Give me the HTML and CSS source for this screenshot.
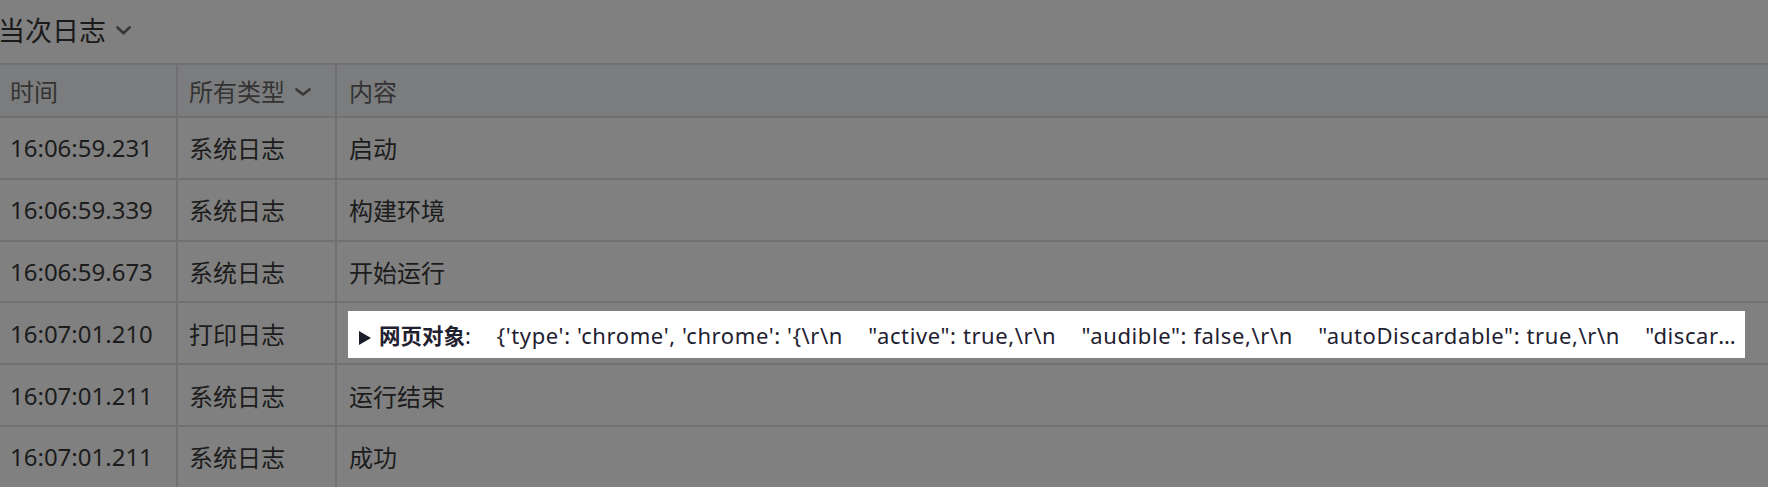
FILE: index.html
```html
<!DOCTYPE html>
<html lang="zh-CN">
<head>
<meta charset="utf-8">
<title>当次日志</title>
<link rel="stylesheet" href="styles.css">
</head>
<body>
<div class="page">
  <div class="title">
    <span class="title-text">当次日志</span>
    <svg class="chev-title" width="15" height="9" viewBox="0 0 15 9"><polyline points="1.5,1.5 7.5,7.3 13.5,1.5" fill="none" stroke="#383838" stroke-width="2.6" stroke-linecap="round" stroke-linejoin="round"/></svg>
  </div>
  <div class="log">
    <div class="row head">
      <div class="cell c1">时间</div>
      <div class="cell c2">所有类型<svg class="chev-head" width="16" height="8" viewBox="0 0 16 8"><polyline points="1.5,1.4 8,6.6 14.5,1.4" fill="none" stroke="#383838" stroke-width="2.6" stroke-linecap="round" stroke-linejoin="round"/></svg></div>
      <div class="cell c3">内容</div>
    </div>
    <div class="row">
      <div class="cell c1">16:06:59.231</div>
      <div class="cell c2">系统日志</div>
      <div class="cell c3">启动</div>
    </div>
    <div class="row">
      <div class="cell c1">16:06:59.339</div>
      <div class="cell c2">系统日志</div>
      <div class="cell c3">构建环境</div>
    </div>
    <div class="row">
      <div class="cell c1">16:06:59.673</div>
      <div class="cell c2">系统日志</div>
      <div class="cell c3">开始运行</div>
    </div>
    <div class="row">
      <div class="cell c1">16:07:01.210</div>
      <div class="cell c2">打印日志</div>
      <div class="cell c3 c-obj">
        <div class="obj"><span class="tri"></span><b class="obj-name">网页对象</b>:    {'type': 'chrome', 'chrome': '{\r\n    "active": true,\r\n    "audible": false,\r\n    "autoDiscardable": true,\r\n    "discarded": false,\r\n    "favIconUrl": "",\r\n    "groupId": -1,\r\n    "height": 937,\r\n    "highlighted": true,\r\n    "id": 1}'}</div>
      </div>
    </div>
    <div class="row">
      <div class="cell c1">16:07:01.211</div>
      <div class="cell c2">系统日志</div>
      <div class="cell c3">运行结束</div>
    </div>
    <div class="row">
      <div class="cell c1">16:07:01.211</div>
      <div class="cell c2">系统日志</div>
      <div class="cell c3">成功</div>
    </div>
  </div>
</div>
</body>
</html>
```
FILE: styles.css
```css
html, body {
  margin: 0;
  padding: 0;
  background: #808080;
  overflow: hidden;
}
body {
  font-family: "Noto Sans", "Noto Sans CJK SC", sans-serif;
  color: #1c1c1c;
}
.page {
  width: 1768px;
}
.title {
  height: 63px;
  box-sizing: border-box;
  padding-bottom: 4px;
  display: flex;
  align-items: center;
  margin-left: -2px;
  font-family: "Noto Sans CJK SC", sans-serif;
  font-size: 27px;
  color: #1a1a1a;
}
.chev-title {
  margin-left: 10px;
  margin-top: 2px;
}
.log {
  border-top: 2px solid #707073;
}
.row {
  display: grid;
  grid-template-columns: 176px 159px 1fr;
  height: 61.8px;
  box-sizing: border-box;
  border-bottom: 2px solid #707073;
  font-size: 24px;
}
.row.head {
  height: 53px;
  background: #7b7c7e;
  color: #333333;
}
.cell {
  display: flex;
  align-items: center;
  white-space: nowrap;
  min-width: 0;
}
.c1 {
  padding-left: 10px;
}
.c2 {
  border-left: 2px solid #707073;
  padding-left: 11px;
}
.c3 {
  border-left: 2px solid #707073;
  padding-left: 12px;
}
.chev-head {
  margin-left: 10px;
  margin-top: 2px;
}
.c-obj {
  padding-left: 11px;
  padding-top: 3px;
}
.obj {
  width: 1397px;
  height: 47px;
  box-sizing: border-box;
  background: #ffffff;
  padding: 0 8px 0 11px;
  display: block;
  line-height: 47px;
  font-size: 22px;
  letter-spacing: 0.6px;
  color: #1f2130;
  white-space: pre;
  overflow: hidden;
  text-overflow: ellipsis;
}
.tri {
  display: inline-block;
  width: 0;
  height: 0;
  border-left: 12px solid #1a1c2a;
  border-top: 7px solid transparent;
  border-bottom: 7px solid transparent;
  margin-right: 8px;
  vertical-align: -1px;
}
.obj-name {
  font-family: "Noto Sans CJK SC", sans-serif;
  font-weight: 700;
  font-size: 21.5px;
  letter-spacing: 0;
}
```
